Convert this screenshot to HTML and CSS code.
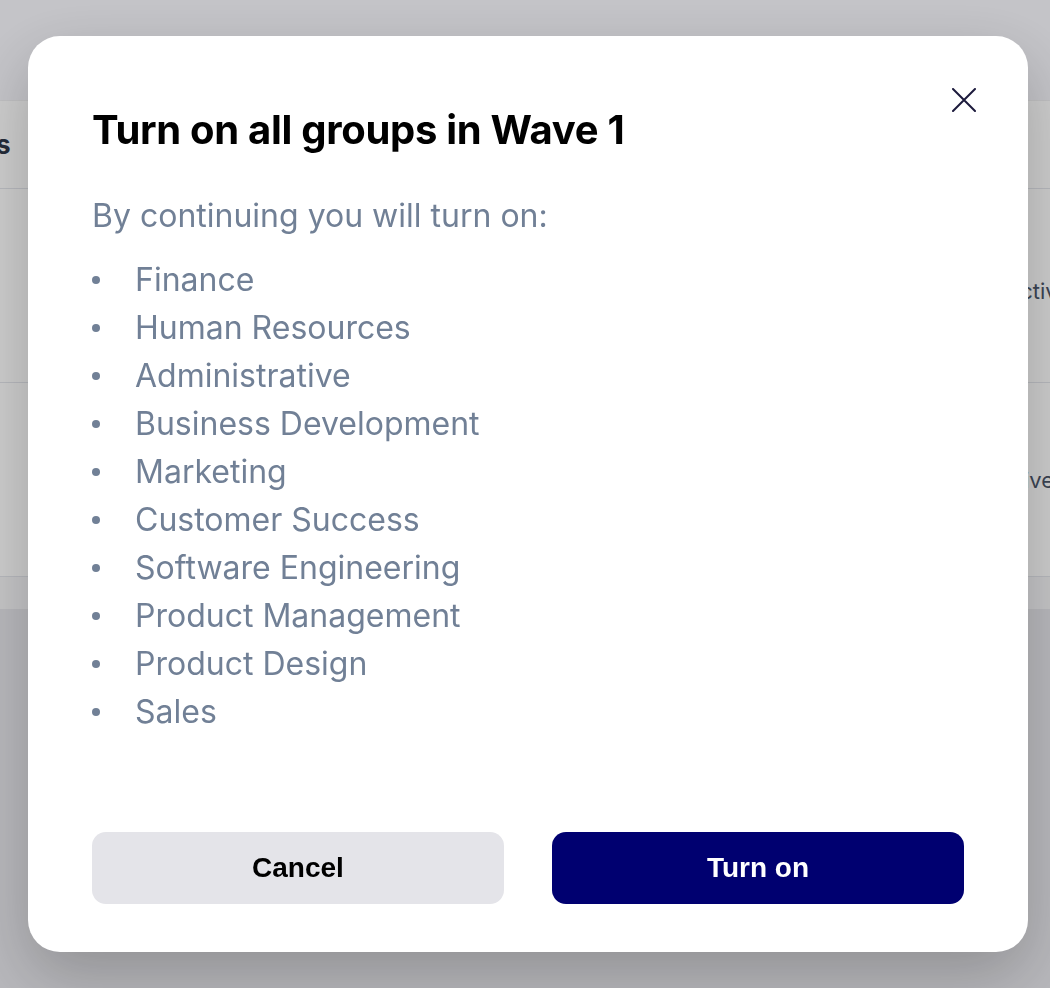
FILE: index.html
```html
<!DOCTYPE html>
<html lang="en">
<head>
    <meta charset="UTF-8">
    <meta name="viewport" content="width=device-width, initial-scale=1.0">
    <title>Waves</title>
    <link rel="stylesheet" href="styles.css">
</head>
<body>

<div class="page">
    <div class="topbar"></div>
    <div class="table-wrap">
        <div class="table">
            <div class="row head">
                <div class="cell">Groups</div>
                <div class="cell"></div>
                <div class="cell"></div>
            </div>
            <div class="row">
                <div class="cell"></div>
                <div class="cell"></div>
                <div class="cell status">Inactive</div>
            </div>
            <div class="row">
                <div class="cell"></div>
                <div class="cell"></div>
                <div class="cell">Active</div>
            </div>
            <div class="row foot"></div>
        </div>
    </div>
</div>

<div class="overlay">
    <div class="modal">
        <button class="close" aria-label="Close">
            <svg width="24" height="24" viewBox="0 0 24 24" fill="none" stroke="currentColor" stroke-width="2" stroke-linecap="round">
                <path d="M1 1 L23 23 M23 1 L1 23"/>
            </svg>
        </button>
        <h1>Turn on all groups in Wave 1</h1>
        <p class="intro">By continuing you will turn on:</p>
        <ul class="groups">
            <li>Finance</li>
            <li>Human Resources</li>
            <li>Administrative</li>
            <li>Business Development</li>
            <li>Marketing</li>
            <li>Customer Success</li>
            <li>Software Engineering</li>
            <li>Product Management</li>
            <li>Product Design</li>
            <li>Sales</li>
        </ul>
        <div class="actions">
            <button class="btn cancel">Cancel</button>
            <button class="btn confirm">Turn on</button>
        </div>
    </div>
</div>

</body>
</html>
```

FILE: styles.css
```css
/* page behind the dialog */
body {
    margin: 0;
    font-family: Inter, "Noto Sans", sans-serif;
    background-color: #e6e6eb;
    height: 100vh;
    overflow: hidden;
}

.topbar {
    height: 100px;
    background-color: #f5f5fa;
}

.table-wrap {
    display: flex;
    justify-content: center;
}

.table {
    flex: 0 0 1240px;
    background-color: #fff;
    border-top: 1px solid #f0f0f2;
}

.row {
    display: grid;
    grid-template-columns: 220px 1fr 180px;
    align-items: center;
    height: 193px;
    border-bottom: 1px solid #e4e6ec;
    color: #4a5568;
    font-size: 22px;
}

.row.head {
    height: 87px;
    color: #2d3748;
    font-weight: 700;
    font-size: 26px;
}

.row.foot {
    height: 32px;
    border-bottom: none;
    background-color: #f6f6f8;
}

.row .cell:first-child {
    padding-left: 13px;
}

.row .cell:last-child {
    padding-left: 24px;
}

.status {
    padding-top: 10px;
}

/* dialog */
.overlay {
    position: fixed;
    inset: 0;
    background-color: rgba(0, 0, 0, 0.2);
    display: flex;
    align-items: center;
    padding-left: 28px;
}

.modal {
    position: relative;
    width: 1000px;
    box-sizing: border-box;
    padding: 64px 64px 48px;
    background-color: #fff;
    border-radius: 32px;
    box-shadow: 0 24px 64px rgba(0, 0, 0, 0.22);
}

.close {
    position: absolute;
    top: 52px;
    right: 52px;
    padding: 0;
    border: none;
    background: none;
    color: #1c1a3c;
    cursor: pointer;
    display: flex;
}

.modal h1 {
    margin: 0 0 32px;
    font-size: 40px;
    line-height: 60px;
    font-weight: 700;
    color: #000;
    letter-spacing: -0.3px;
}

.intro {
    margin: 0 0 16px;
    font-size: 32px;
    line-height: 48px;
    color: #718096;
}

.groups {
    list-style: none;
    margin: 0 0 96px;
    padding: 0;
}

.groups li {
    display: flex;
    align-items: center;
    gap: 35px;
    font-size: 32px;
    line-height: 48px;
    color: #718096;
}

.groups li::before {
    content: "";
    width: 8px;
    height: 8px;
    border-radius: 50%;
    background-color: #718096;
}

.actions {
    display: flex;
    gap: 48px;
}

.btn {
    flex: 1;
    height: 72px;
    border: none;
    border-radius: 14px;
    font-family: "Liberation Sans", Arial, sans-serif;
    font-size: 28px;
    font-weight: 700;
    cursor: pointer;
}

.cancel {
    background-color: #e4e4e9;
    color: #000;
}

.confirm {
    background-color: #000070;
    color: #fff;
}
```
